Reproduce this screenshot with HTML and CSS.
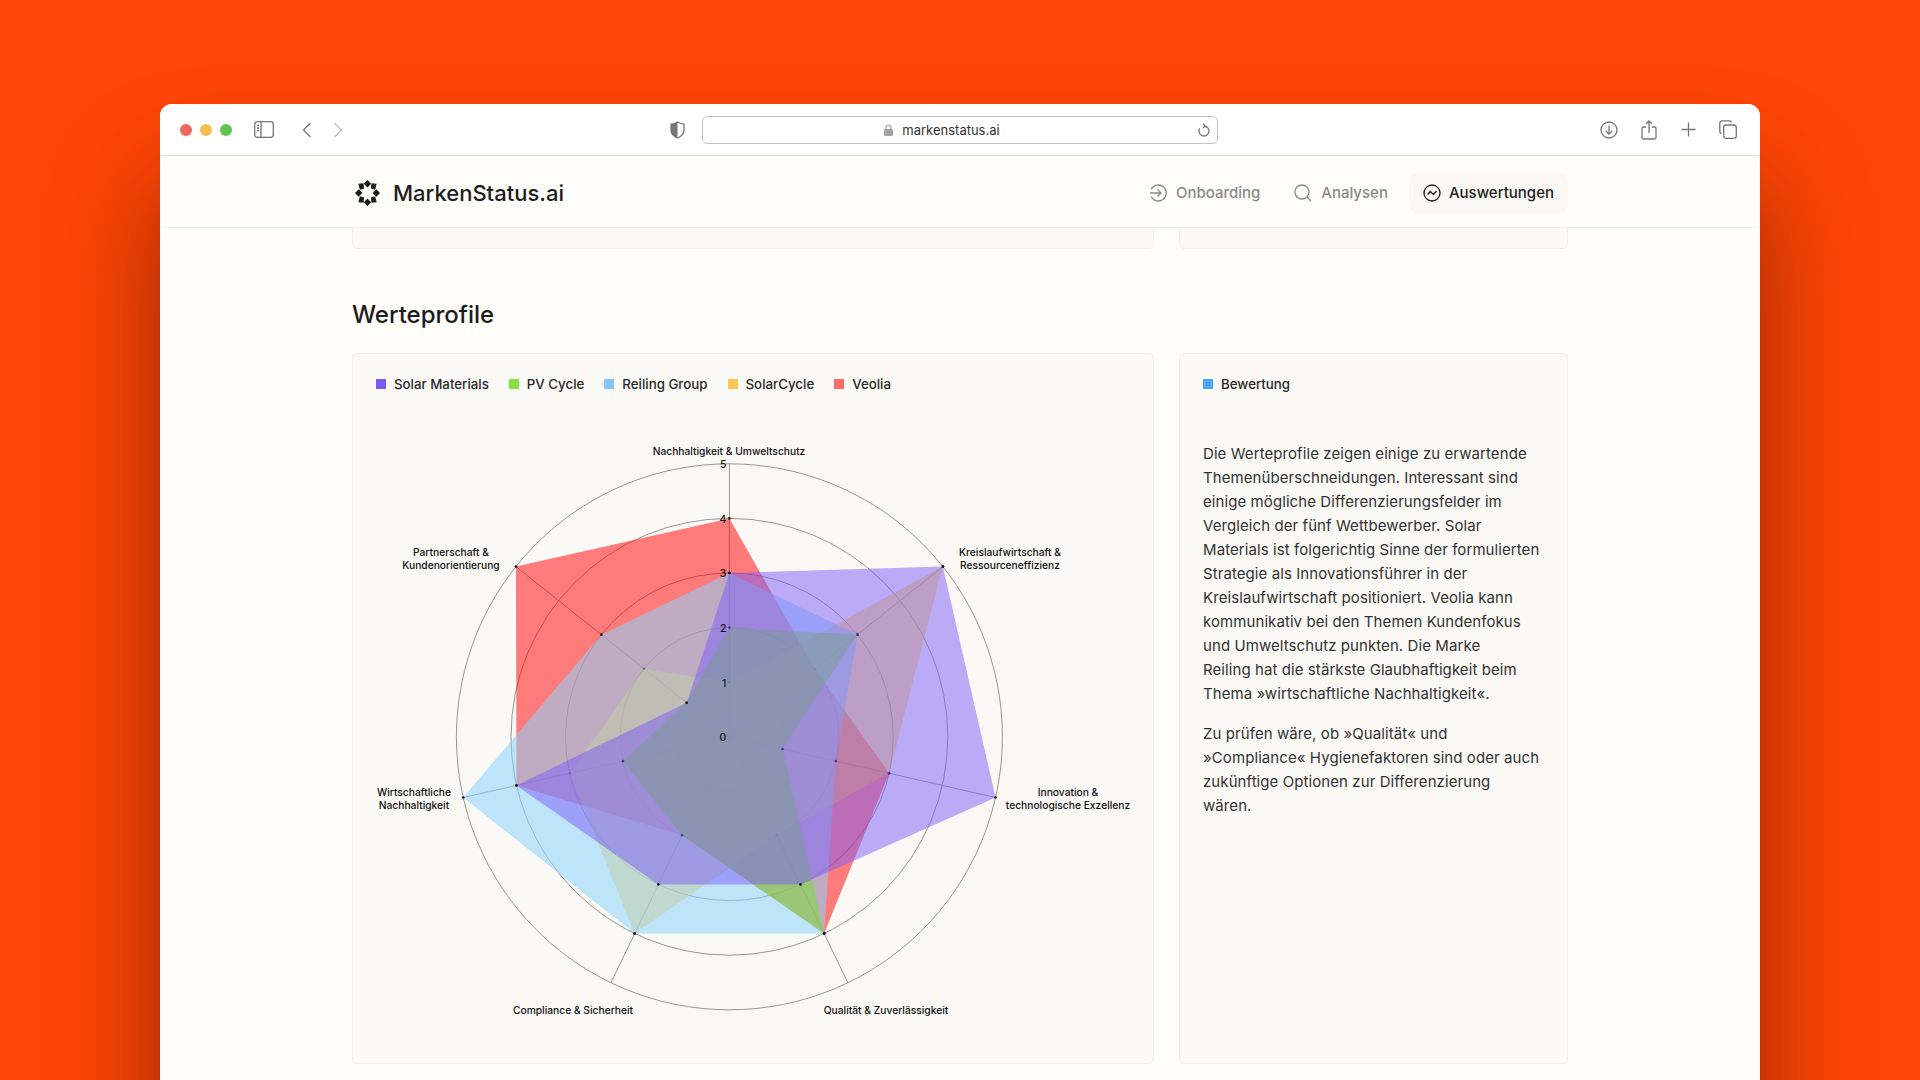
FILE: index.html
```html
<!DOCTYPE html>
<html lang="de">
<head>
    <meta charset="UTF-8">
    <title>MarkenStatus.ai</title>
    <link rel="stylesheet" href="styles.css">
</head>
<body>
    <div class="window">
        <div class="toolbar">
            <div class="toolbar-left">
                <span class="light red"></span>
                <span class="light yellow"></span>
                <span class="light green"></span>
                <svg class="icon sidebar-icon" width="20" height="17" viewBox="0 0 20 17"><rect x="0.7" y="0.7" width="18.6" height="15.6" rx="2.5"/><path d="M7 1v15M3 4.5h2M3 7h2M3 9.500h2"/></svg>
                <svg class="icon back-icon" width="10" height="16" viewBox="0 0 10 16"><path d="M8.500 1L1.500 8l7 7"/></svg>
                <svg class="icon forward-icon" width="10" height="16" viewBox="0 0 10 16"><path d="M1.500 1l7 7-7 7"/></svg>
            </div>
            <div class="toolbar-center">
                <svg class="shield" width="15" height="18" viewBox="0 0 15 18"><path class="shield-line" d="M7.500 1C5.500 2.300 3.500 3 1 3.200V9c0 3.800 2.600 6.300 6.500 8 3.900-1.700 6.500-4.200 6.500-8V3.200C11.500 3 9.500 2.300 7.500 1z"/><path class="shield-fill" d="M7.500 1C5.500 2.300 3.500 3 1 3.200V9c0 3.800 2.600 6.300 6.500 8z"/></svg>
                <div class="url-bar">
                    <svg class="lock" width="9" height="12" viewBox="0 0 9 12"><path d="M2 5V3.500a2.500 2.500 0 0 1 5 0V5" fill="none" stroke="#a3a3a3" stroke-width="1.200"/><rect y="5" width="9" height="7" rx="1.200" fill="#a3a3a3"/></svg>
                    <span class="url-text">markenstatus.ai</span>
                    <svg class="icon reload" width="12" height="15" viewBox="0 0 12 15"><path d="M6 3a5 5 0 1 1-4.300 2.400M5 0.800L7 3 5 5"/></svg>
                </div>
            </div>
            <div class="toolbar-right">
                <svg class="icon" width="18" height="18" viewBox="0 0 18 18"><circle cx="9" cy="9" r="8"/><path d="M9 4.500v8.500M5.800 10L9 13.200 12.200 10"/></svg>
                <svg class="icon" width="16" height="20" viewBox="0 0 16 20"><path d="M5 7H2.500A1.500 1.500 0 0 0 1 8.500v9A1.500 1.500 0 0 0 2.500 19h11a1.500 1.500 0 0 0 1.500-1.500v-9A1.500 1.500 0 0 0 13.500 7H11M8 13V1M5 3.800L8 1l3 2.800"/></svg>
                <svg class="icon" width="15" height="15" viewBox="0 0 15 15"><path d="M7.500 0.500v14M0.500 7.500h14"/></svg>
                <svg class="icon" width="18" height="19" viewBox="0 0 18 19"><rect x="4.700" y="5" width="12.600" height="13.300" rx="2.500"/><path d="M2.500 13.500A1.800 1.800 0 0 1 0.800 11.700V3A2.300 2.300 0 0 1 3 0.800h7.500A2 2 0 0 1 12.500 2.500"/></svg>
            </div>
        </div>

        <header class="site-header">
            <div class="logo">
                <svg width="25" height="26" viewBox="0 0 25 26" fill="#1d1c1a">
                    <path d="M12.500 0l3.700 3.700-3.700 3.700-3.700-3.700zM12.500 18.600l3.700 3.700-3.700 3.700-3.700-3.700zM3.700 9.300L7.400 13l-3.700 3.700L0 13zM21.300 9.300L25 13l-3.700 3.700L17.600 13z"/>
                    <path d="M3.300 3.800l5.200-.6.600 5.200-4.200 1.300zM21.700 3.800l-5.200-.6-.600 5.200 4.200 1.300zM3.300 22.200l5.200.6.600-5.200-4.200-1.300zM21.700 22.200l-5.200.6-.600-5.200 4.200-1.300z"/>
                </svg>
                <span class="logo-text">MarkenStatus.ai</span>
            </div>
            <nav class="nav">
                <a class="nav-item">
                    <svg class="nav-icon" width="18" height="18" viewBox="0 0 18 18"><path d="M2.200 5.200a8 8 0 1 1 0 7.600M1 9h11M8.500 5.500L12 9l-3.500 3.500"/></svg>
                    Onboarding
                </a>
                <a class="nav-item">
                    <svg class="nav-icon" width="18" height="18" viewBox="0 0 18 18"><circle cx="8" cy="8" r="7"/><path d="M13 13l4 4"/></svg>
                    Analysen
                </a>
                <a class="nav-item active">
                    <svg class="nav-icon" width="18" height="18" viewBox="0 0 18 18"><circle cx="9" cy="9" r="8"/><path d="M4.500 10.500L7.300 7.500l3.200 3 3-3.500"/></svg>
                    Auswertungen
                </a>
            </nav>
        </header>

        <main class="content">
            <div class="row stub-row">
                <div class="card"></div>
                <div class="card"></div>
            </div>

            <h2 class="section-title">Werteprofile</h2>

            <div class="row profile-row">
                <div class="card">
                    <div class="legend chart-legend">
                        <span class="legend-item"><i class="swatch solar"></i>Solar Materials</span>
                        <span class="legend-item"><i class="swatch pv"></i>PV Cycle</span>
                        <span class="legend-item"><i class="swatch reiling"></i>Reiling Group</span>
                        <span class="legend-item"><i class="swatch cycle"></i>SolarCycle</span>
                        <span class="legend-item"><i class="swatch veolia"></i>Veolia</span>
                    </div>
                    <svg id="radar" class="radar" width="800" height="640" viewBox="0 0 800 640"></svg>
                </div>
                <div class="card note">
                    <div class="legend">
                        <span class="legend-item"><i class="swatch rating"></i>Bewertung</span>
                    </div>
                    <p>Die Werteprofile zeigen einige zu erwartende Themenüberschneidungen. Interessant sind einige mögliche Differenzierungsfelder im Vergleich der fünf Wettbewerber. Solar Materials ist folgerichtig Sinne der formulierten Strategie als Innovationsführer in der Kreislaufwirtschaft positioniert. Veolia kann kommunikativ bei den Themen Kundenfokus und Umweltschutz punkten. Die Marke<br>Reiling hat die stärkste Glaubhaftigkeit beim<br>Thema »wirtschaftliche Nachhaltigkeit«.</p>
                    <p>Zu prüfen wäre, ob »Qualität« und »Compliance« Hygienefaktoren sind oder auch zukünftige Optionen zur Differenzierung<br>wären.</p>
                </div>
            </div>
        </main>
    </div>
    <script src="chart.js"></script>
</body>
</html>
```
FILE: styles.css
```css
* {
    box-sizing: border-box;
}

html, body {
    height: 100%;
}

body {
    margin: 0;
    overflow: hidden;
    background-color: #ff4505;
    font-family: "Inter", "Liberation Sans", sans-serif;
    color: #1d1c1a;
    padding: 104px 160px 0;
}

.window {
    height: 1100px;
    background-color: #fefdfa;
    border-radius: 12px 12px 0 0;
    box-shadow: 0 80px 110px rgba(0, 0, 0, 0.42);
}

/* browser chrome */
.toolbar {
    height: 52px;
    display: grid;
    grid-template-columns: 490px 548px 1fr;
    align-items: center;
    padding: 0 23px 0 20px;
    background-color: #fff;
    border-bottom: 1px solid #dcdcdc;
    border-radius: 12px 12px 0 0;
}

.toolbar-left {
    display: flex;
    align-items: center;
}

.light {
    width: 12px;
    height: 12px;
    border-radius: 50%;
    margin-right: 8px;
}

.light.red { background-color: #ee6a5f; }
.light.yellow { background-color: #f5bd4f; }
.light.green { background-color: #61c454; }

.icon {
    fill: none;
    stroke: #767676;
    stroke-width: 1.3;
}

.sidebar-icon { margin: 0 0 0 14px; }
.back-icon { margin-left: 28px; }
.forward-icon { margin-left: 21px; stroke: #bcbcbc; }

.toolbar-center {
    display: flex;
    align-items: center;
    gap: 17px;
}

.shield-line { fill: none; stroke: #767676; stroke-width: 1.3; }
.shield-fill { fill: #767676; }

.url-bar {
    flex: 1;
    height: 28px;
    display: flex;
    align-items: center;
    justify-content: center;
    gap: 9px;
    padding-right: 36px;
    position: relative;
    background-color: #fff;
    border: 1px solid #c2c2c2;
    border-radius: 5px;
    font-size: 13px;
    color: #333;
}

.reload {
    position: absolute;
    right: 7px;
    top: 6px;
}

.toolbar-right {
    display: flex;
    justify-content: flex-end;
    align-items: center;
    gap: 23.500px;
}

/* site header */
.site-header {
    height: 72px;
    display: flex;
    justify-content: space-between;
    align-items: center;
    padding: 2px 192px 0 195px;
    border-bottom: 1px solid #f1f0ec;
}

.logo {
    display: flex;
    align-items: center;
    gap: 13px;
}

.logo-text {
    font-size: 22px;
    font-weight: 500;
}

.nav {
    display: flex;
    align-items: center;
    gap: 8px;
}

.nav-item {
    height: 40px;
    display: flex;
    align-items: center;
    gap: 9px;
    padding: 0 13px;
    border-radius: 8px;
    font-size: 15px;
    font-weight: 500;
    color: #8b8985;
}

.nav-item.active {
    background-color: #f9f8f5;
    color: #1d1c1a;
    gap: 8px;
    padding: 0 14px;
}

.nav-icon {
    fill: none;
    stroke: currentColor;
    stroke-width: 1.300;
}

/* page content */
.content {
    padding: 0 192px;
}

.row {
    display: grid;
    grid-template-columns: 802px 389px;
    gap: 25px;
}

.card {
    background-color: #faf9f6;
    border: 1px solid #f1f0ec;
    border-radius: 5px;
}

.stub-row {
    height: 21px;
}

.stub-row .card {
    border-top: none;
    border-radius: 0 0 5px 5px;
}

.section-title {
    margin: 0;
    padding: 49px 0 22px;
    font-size: 24px;
    line-height: 33px;
    font-weight: 500;
}

.profile-row {
    height: 711px;
}

.legend {
    display: flex;
    gap: 20px;
    padding: 22px 23px 0;
}

.legend-item {
    display: flex;
    align-items: center;
    gap: 8px;
    font-size: 13.300px;
    line-height: 16px;
    font-weight: 500;
    color: #2a2926;
}

.swatch {
    width: 10px;
    height: 10px;
}

.swatch.solar { background-color: #7c5cf5; }
.swatch.pv { background-color: #8adf3e; }
.swatch.reiling { background-color: #80c8ff; }
.swatch.cycle { background-color: #fcc84f; }
.swatch.veolia { background-color: #f96b6b; }
.swatch.rating { background-color: #4dabff; }

.radar {
    display: block;
    margin-top: 28px;
}

.radar text {
    font-family: "Inter", "Liberation Sans", sans-serif;
    font-size: 10.250px;
    font-weight: 500;
    fill: #111;
    text-anchor: middle;
}

.radar .tick {
    font-size: 10.500px;
    text-anchor: end;
    dominant-baseline: middle;
}

.note .legend {
    margin-bottom: 50px;
}

.note p {
    margin: 0 0 16px;
    padding: 0 23px;
    font-size: 15px;
    line-height: 24px;
    letter-spacing: 0.08px;
    color: #333230;
}
```
FILE: chart.js
```js
const svg = document.getElementById('radar');
const ns = 'http://www.w3.org/2000/svg';

const center = { x: 376.4, y: 316.8 };
const step = 54.6;
const axes = 7;

// drawn bottom to top
const datasets = [
    { color: 'rgba(255, 0, 0, 0.5)', values: [4, 2, 3, 4, 2, 4, 5] },
    { color: 'rgba(255, 200, 60, 0.5)', values: [1, 5, 3, 2, 4, 3, 2] },
    { color: 'rgba(140, 212, 253, 0.55)', values: [3, 3, 2, 4, 4, 5, 3] },
    { color: 'rgba(116, 226, 44, 0.5)', values: [2, 3, 1, 4, 2, 2, 1] },
    { color: 'rgba(124, 92, 245, 0.5)', values: [3, 5, 5, 3, 3, 4, 1] }
];

const labels = [
    { x: 376, y: 35, lines: ['Nachhaltigkeit & Umweltschutz'] },
    { x: 657, y: 136, lines: ['Kreislaufwirtschaft &', 'Ressourceneffizienz'] },
    { x: 715, y: 376, lines: ['Innovation &', 'technologische Exzellenz'] },
    { x: 533, y: 594, lines: ['Qualität & Zuverlässigkeit'] },
    { x: 220, y: 594, lines: ['Compliance & Sicherheit'] },
    { x: 61, y: 376, lines: ['Wirtschaftliche', 'Nachhaltigkeit'] },
    { x: 98, y: 136, lines: ['Partnerschaft &', 'Kundenorientierung'] }
];

function add(name, attrs, text) {
    const el = document.createElementNS(ns, name);
    Object.keys(attrs).forEach((key) => el.setAttribute(key, attrs[key]));
    if (text !== undefined) el.textContent = text;
    svg.appendChild(el);
    return el;
}

function point(axis, value) {
    const angle = (axis * 2 * Math.PI) / axes;
    return {
        x: center.x + Math.sin(angle) * value * step,
        y: center.y - Math.cos(angle) * value * step
    };
}

for (let r = 1; r <= 5; r++) {
    add('circle', { cx: center.x, cy: center.y, r: r * step, fill: 'none', stroke: '#8c8c8a', 'stroke-width': 0.9 });
}

for (let i = 0; i < axes; i++) {
    const end = point(i, 5);
    add('line', { x1: center.x, y1: center.y, x2: end.x, y2: end.y, stroke: '#8c8c8a', 'stroke-width': 0.9 });
}

datasets.forEach((set) => {
    const points = set.values.map((value, i) => point(i, value));
    add('polygon', { points: points.map((p) => `${p.x},${p.y}`).join(' '), fill: set.color });
    points.forEach((p) => add('circle', { cx: p.x, cy: p.y, r: 1.3, fill: '#111' }));
});

for (let t = 0; t <= 5; t++) {
    add('text', { class: 'tick', x: center.x - 3, y: center.y - t * step + 1.5 }, t);
}

labels.forEach((label) => {
    label.lines.forEach((line, i) => {
        add('text', { x: label.x, y: label.y + i * 13.300 }, line);
    });
});
```
